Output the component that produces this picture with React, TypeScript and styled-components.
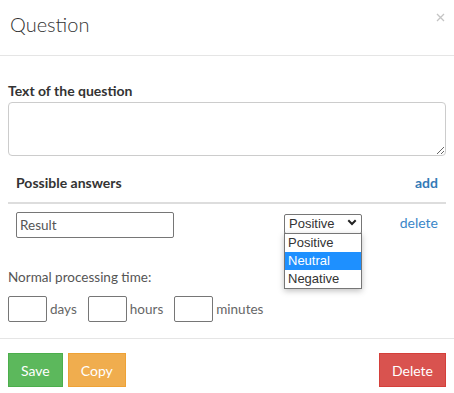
import React from "react";
import styled, { createGlobalStyle } from "styled-components";

const GlobalStyle = createGlobalStyle`
  html, body {
    margin: 0;
    padding: 0;
    background: #fff;
  }
  body {
    font-family: Lato, "Open Sans", sans-serif;
    color: #333;
  }
`;

const options = ["Positive", "Neutral", "Negative"];

export default function App() {
  return (
    <>
      <GlobalStyle />
      <Modal>
        <Header>
          <Title>Question</Title>
          <CloseButton aria-label="Close">
            <svg width="9" height="9" viewBox="0 0 9 9">
              <path d="M1 1L8 8M8 1L1 8" stroke="#c4c4c4" strokeWidth="1.3" />
            </svg>
          </CloseButton>
        </Header>

        <Body>
          <FieldLabel>Text of the question</FieldLabel>
          <QuestionText />

          <AnswersHead>
            <HeadTitle>Possible answers</HeadTitle>
            <AddLink href="#">add</AddLink>
          </AnswersHead>

          <AnswerRow>
            <NameCell>
              <AnswerInput defaultValue="Result" />
            </NameCell>
            <TypeCell>
              <SelectWrap>
                <Select defaultValue="Positive">
                  {options.map((o) => (
                    <option key={o}>{o}</option>
                  ))}
                </Select>
                <Chevron width="10" height="7" viewBox="0 0 10 7">
                  <path d="M1.3 1.3L5 5L8.7 1.3" stroke="#222" strokeWidth="2" fill="none" />
                </Chevron>
                <OptionList>
                  {options.map((o) => (
                    <OptionItem key={o} $active={o === "Neutral"}>
                      {o}
                    </OptionItem>
                  ))}
                </OptionList>
              </SelectWrap>
            </TypeCell>
            <ActionCell>
              <DeleteLink href="#">delete</DeleteLink>
            </ActionCell>
          </AnswerRow>

          <TimeLabel>Normal processing time:</TimeLabel>
          <TimeRow>
            <TimeInput />
            <Unit>days</Unit>
            <TimeInput />
            <Unit>hours</Unit>
            <TimeInput />
            <Unit>minutes</Unit>
          </TimeRow>
        </Body>

        <Footer>
          <Button $bg="#5cb85c" $border="#4cae4c">Save</Button>
          <Button $bg="#f0ad4e" $border="#eea236">Copy</Button>
          <Spacer />
          <Button $bg="#d9534f" $border="#d43f3a">Delete</Button>
        </Footer>
      </Modal>
    </>
  );
}

const Modal = styled.div`
  display: flex;
  flex-direction: column;
  width: 454px;
  background: #fff;
`;

const Header = styled.div`
  display: flex;
  align-items: flex-start;
  justify-content: space-between;
  height: 56px;
  box-sizing: border-box;
  padding: 10px 9px 0 10px;
  border-bottom: 1px solid #e5e5e5;
`;

const Title = styled.h4`
  margin: 0;
  font-size: 20px;
  font-weight: 300;
  line-height: 28px;
  color: #333;
`;

const CloseButton = styled.button`
  display: flex;
  padding: 0;
  margin-top: 3px;
  border: none;
  background: none;
  cursor: pointer;
`;

const Body = styled.div`
  display: flex;
  flex-direction: column;
  padding: 26px 8px 16px;
`;

const FieldLabel = styled.label`
  font-size: 14px;
  font-weight: 700;
  line-height: 18px;
  color: #333;
  margin-bottom: 2px;
`;

const QuestionText = styled.textarea`
  box-sizing: border-box;
  width: 100%;
  height: 54px;
  border: 1px solid #ccc;
  border-radius: 4px;
  resize: vertical;
  font-family: inherit;
  font-size: 13px;
`;

const AnswersHead = styled.div`
  display: flex;
  justify-content: space-between;
  align-items: center;
  margin-top: 13px;
  padding: 5px 8px 10px;
  border-bottom: 2px solid #ddd;
`;

const HeadTitle = styled.span`
  font-size: 14px;
  font-weight: 700;
  line-height: 18px;
  color: #333;
`;

const AddLink = styled.a`
  font-size: 14px;
  font-weight: 700;
  line-height: 18px;
  color: #337ab7;
  text-decoration: none;
`;

const AnswerRow = styled.div`
  display: flex;
  align-items: flex-start;
  padding: 8px 8px 8px;
`;

const NameCell = styled.div`
  width: 268px;
`;

const TypeCell = styled.div`
  width: 115px;
`;

const ActionCell = styled.div`
  flex: 1;
  text-align: right;
`;

const AnswerInput = styled.input`
  box-sizing: border-box;
  width: 158px;
  height: 26px;
  padding: 1px 3px;
  border: 1px solid #767676;
  border-radius: 2px;
  font-family: Lato, sans-serif;
  font-size: 13.5px;
  color: #555;
`;

const SelectWrap = styled.div`
  position: relative;
  width: 78px;
`;

const Select = styled.select`
  appearance: none;
  box-sizing: border-box;
  width: 78px;
  height: 20px;
  padding: 0 0 0 4px;
  border: 1px solid #767676;
  border-radius: 2px;
  background: #fff;
  font-family: "Liberation Sans", Arial, sans-serif;
  font-size: 13px;
  color: #333;
`;

const Chevron = styled.svg`
  position: absolute;
  top: 7px;
  right: 5px;
  pointer-events: none;
`;

const OptionList = styled.ul`
  position: absolute;
  top: 21px;
  left: 0;
  box-sizing: border-box;
  width: 78px;
  margin: 0;
  padding: 0;
  list-style: none;
  border: 1px solid #767676;
  background: #fff;
  box-shadow: 0 2px 6px rgba(0, 0, 0, 0.25);
`;

const OptionItem = styled.li<{ $active?: boolean }>`
  height: 18px;
  line-height: 18px;
  padding-left: 3px;
  font-family: "Liberation Sans", Arial, sans-serif;
  font-size: 13px;
  color: ${(p) => (p.$active ? "#fff" : "#333")};
  background: ${(p) => (p.$active ? "#1e90ff" : "#fff")};
`;

const DeleteLink = styled.a`
  font-size: 14px;
  line-height: 18px;
  color: #3a86c8;
  text-decoration: none;
`;

const TimeLabel = styled.div`
  margin-top: 22px;
  font-size: 13.5px;
  line-height: 18px;
  color: #555;
`;

const TimeRow = styled.div`
  display: flex;
  align-items: center;
  margin-top: 10px;
`;

const TimeInput = styled.input`
  box-sizing: border-box;
  width: 39px;
  height: 26px;
  border: 1px solid #767676;
  border-radius: 2px;
`;

const Unit = styled.span`
  margin: 0 11px 0 3px;
  font-size: 13.5px;
  color: #666;
`;

const Footer = styled.div`
  display: flex;
  align-items: center;
  padding: 14px 8px 6px;
  border-top: 1px solid #e5e5e5;
`;

const Spacer = styled.div`
  flex: 1;
`;

const Button = styled.button<{ $bg: string; $border: string }>`
  height: 34px;
  padding: 0 12px;
  margin-right: 5px;
  border: 1px solid ${(p) => p.$border};
  border-radius: 0;
  background: ${(p) => p.$bg};
  color: #fff;
  font-family: Lato, sans-serif;
  font-size: 14px;

  &:last-child {
    margin-right: 0;
  }
`;
